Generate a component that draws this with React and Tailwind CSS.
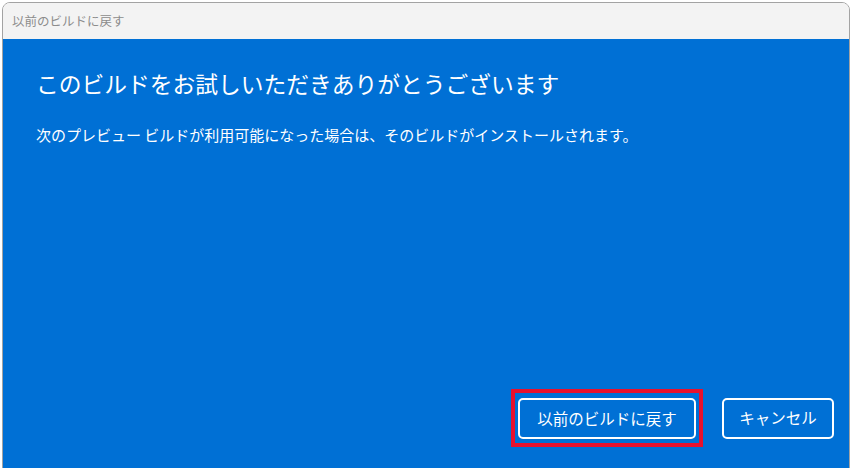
export default function App() {
  return (
    <div className="w-[852px] h-[468px] bg-white pt-[2px] pl-[2px] pr-[2px] overflow-hidden font-['Noto_Sans_CJK_JP','Noto_Sans',sans-serif]">
      <div className="flex flex-col h-[470px] rounded-t-[8px] border border-[#a3a3a3] overflow-hidden">
        {/* Title bar */}
        <div className="h-[36px] shrink-0 bg-[#f3f3f3] flex items-center pl-[9px] text-[12.5px] text-[#8c8c8c]">
          以前のビルドに戻す
        </div>

        {/* Content */}
        <div className="flex-1 bg-[#0070d5] text-white flex flex-col pl-[33px]">
          <h1 className="mt-[29px] text-[22.75px] leading-[32px] font-normal">
            このビルドをお試しいただきありがとうございます
          </h1>
          <p className="mt-[25px] text-[15px] leading-[20px]">
            次のプレビュー ビルドが利用可能になった場合は、そのビルドがインストールされます。
          </p>

          {/* Buttons */}
          <div className="mt-auto flex justify-end items-center gap-[19px] pr-[15px] pb-[24px]">
            <div className="border-4 border-[#e8112d] px-[3px] pt-[5px] pb-[4px]">
              <button className="w-[178px] h-[41px] border-2 border-white rounded-[5px] text-[15.5px] text-white flex items-center justify-center">
                以前のビルドに戻す
              </button>
            </div>
            <button className="w-[112px] h-[41px] border-2 border-white rounded-[5px] text-[15.5px] text-white flex items-center justify-center">
              キャンセル
            </button>
          </div>
        </div>
      </div>
    </div>
  );
}
